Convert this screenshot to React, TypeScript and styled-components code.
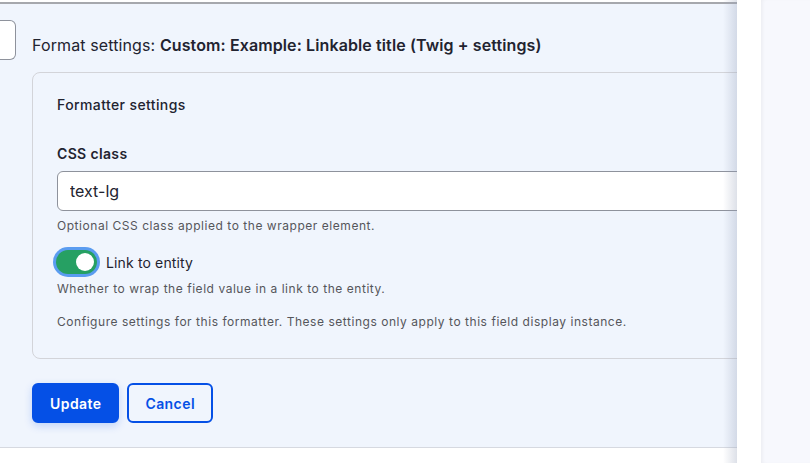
import React, { useState } from 'react';
import styled, { createGlobalStyle } from 'styled-components';

const GlobalStyle = createGlobalStyle`
  html, body {
    margin: 0;
    padding: 0;
    background: #ffffff;
    font-family: Inter, "Noto Sans", sans-serif;
    color: #222330;
  }
  * { box-sizing: border-box; }
`;

const Page = styled.div`
  display: flex;
  height: 463px;
  width: 810px;
  overflow: hidden;
  background: #ffffff;
`;

const MainColumn = styled.div`
  position: relative;
  width: 737px;
  flex: none;
  overflow: hidden;
  padding-top: 2px;

  &::after {
    content: '';
    position: absolute;
    top: 0;
    right: 0;
    bottom: 0;
    width: 14px;
    background: linear-gradient(to right, rgba(150, 160, 185, 0), rgba(150, 160, 185, 0.32));
    pointer-events: none;
  }
`;

const Sidebar = styled.aside`
  margin-left: 24px;
  flex: 1;
  background: #f7f8fd;
  box-shadow: inset 3px 0 4px -2px rgba(0, 0, 0, 0.06);
`;

const Panel = styled.section`
  background: #f0f5fd;
  border-top: 2px solid #a6a8ad;
  border-bottom: 1px solid #d6d9e0;
  padding: 16px 0 24px 32px;
`;

const TitleRow = styled.div`
  display: flex;
  align-items: center;
  height: 40px;
  margin-left: -32px;
`;

const Handle = styled.div`
  width: 16px;
  height: 40px;
  margin-right: 16px;
  background: #ffffff;
  border: 1px solid #8e929c;
  border-left: none;
  border-radius: 0 6px 6px 0;
`;

const Title = styled.h2`
  margin: 0;
  padding-top: 9px;
  font-size: 16px;
  font-weight: 400;
  letter-spacing: 0.007em;
  color: #222330;
  white-space: nowrap;

  strong {
    font-weight: 600;
  }
`;

const Fieldset = styled.div`
  width: 760px;
  margin-top: 12px;
  border: 1px solid #d3d4d9;
  border-radius: 8px;
  padding: 22px 0 28px 24px;
`;

const Legend = styled.div`
  font-size: 14px;
  font-weight: 500;
  line-height: 20px;
  letter-spacing: 0.028em;
  color: #222330;
`;

const Label = styled.label`
  display: block;
  margin-top: 29px;
  font-size: 14px;
  font-weight: 600;
  line-height: 20px;
  letter-spacing: 0.025em;
  color: #222330;
`;

const TextInput = styled.input`
  display: block;
  width: 720px;
  height: 40px;
  margin-top: 7px;
  padding: 0 12px;
  font-family: Inter, "Noto Sans", sans-serif;
  font-size: 16px;
  color: #222330;
  background: #ffffff;
  border: 1px solid #8e929c;
  border-radius: 6px;
  outline: none;
`;

const Description = styled.div<{ $gap?: number }>`
  margin-top: ${(p) => p.$gap ?? 6}px;
  font-size: 12px;
  line-height: 17px;
  letter-spacing: 0.045em;
  color: #55565b;
`;

const ToggleRow = styled.label`
  display: flex;
  align-items: center;
  gap: 6px;
  margin-top: 13px;
  margin-left: -4px;
  font-size: 14px;
  letter-spacing: 0.01em;
  color: #222330;
  cursor: pointer;
`;

const ToggleTrack = styled.span<{ $on: boolean }>`
  position: relative;
  display: inline-block;
  width: 41px;
  height: 24px;
  border-radius: 12px;
  background: ${(p) => (p.$on ? '#26a063' : '#8e929c')};
  box-shadow: 0 0 0 3px #5a9cf0;
  margin: 3px;

  &::after {
    content: '';
    position: absolute;
    top: 3px;
    left: ${(p) => (p.$on ? '20px' : '3px')};
    width: 18px;
    height: 18px;
    border-radius: 50%;
    background: #ffffff;
  }
`;

const Actions = styled.div`
  display: flex;
  gap: 8px;
  margin-top: 24px;
`;

const Button = styled.button<{ $primary?: boolean }>`
  height: 40px;
  padding: 0 16px;
  font-family: Inter, "Noto Sans", sans-serif;
  font-size: 14px;
  font-weight: 600;
  letter-spacing: 0.03em;
  border-radius: 6px;
  cursor: pointer;
  color: ${(p) => (p.$primary ? '#ffffff' : '#0550e6')};
  background: ${(p) => (p.$primary ? '#0550e6' : 'transparent')};
  border: 2px solid #0550e6;
  box-shadow: ${(p) => (p.$primary ? '0 3px 8px rgba(5, 80, 230, 0.2)' : 'none')};
`;

export default function App() {
  const [linked, setLinked] = useState(true);
  const [cssClass, setCssClass] = useState('text-lg');

  return (
    <>
      <GlobalStyle />
      <Page>
        <MainColumn>
          <Panel>
            <TitleRow>
              <Handle />
              <Title>
                Format settings: <strong>Custom: Example: Linkable title (Twig + settings)</strong>
              </Title>
            </TitleRow>
            <Fieldset>
              <Legend>Formatter settings</Legend>
              <Label htmlFor="css-class">CSS class</Label>
              <TextInput id="css-class" value={cssClass} onChange={(e) => setCssClass(e.target.value)} />
              <Description>Optional CSS class applied to the wrapper element.</Description>
              <ToggleRow onClick={() => setLinked(!linked)}>
                <ToggleTrack $on={linked} />
                Link to entity
              </ToggleRow>
              <Description $gap={3}>Whether to wrap the field value in a link to the entity.</Description>
              <Description $gap={16}>
                Configure settings for this formatter. These settings only apply to this field display instance.
              </Description>
            </Fieldset>
            <Actions>
              <Button $primary>Update</Button>
              <Button>Cancel</Button>
            </Actions>
          </Panel>
        </MainColumn>
        <Sidebar />
      </Page>
    </>
  );
}
